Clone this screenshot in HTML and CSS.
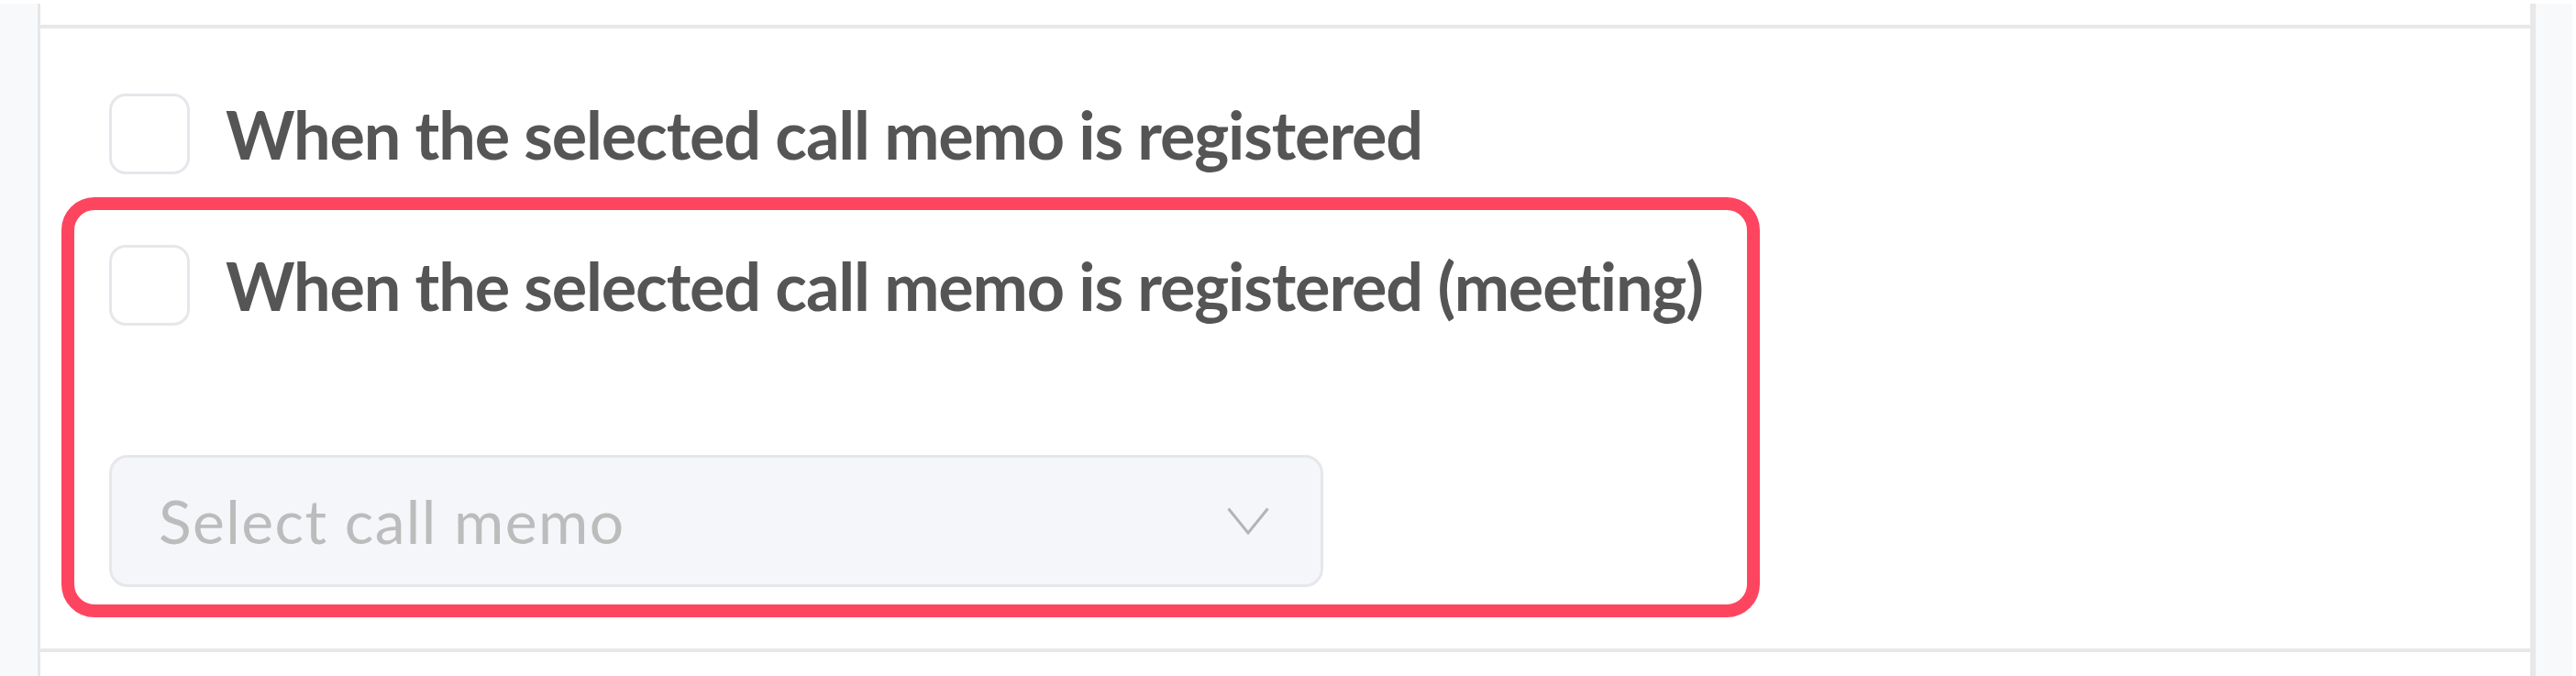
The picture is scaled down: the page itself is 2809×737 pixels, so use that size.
FILE: index.html
```html
<!DOCTYPE html>
<html lang="en-US">
    <head>
        <meta charset="utf-8">
        <title>Call memo triggers</title>
        <meta name="viewport" content="width=device-width, initial-scale=1">
        <link rel="stylesheet" href="styles.css">
    </head>
<body>
    <div class="page">
        <aside class="rail"></aside>

        <main class="panel">
            <div class="prev"></div>

            <section class="triggers">
                <label class="option option-plain">
                    <span class="box"></span>
                    <span class="label">When the selected call memo is registered</span>
                </label>

                <!-- highlighted trigger -->
                <div class="highlight">
                    <label class="option">
                        <span class="box"></span>
                        <span class="label">When the selected call memo is registered (meeting)</span>
                    </label>

                    <div class="select">
                        <span class="placeholder">Select call memo</span>
                        <svg class="chevron" width="46" height="30" viewBox="0 0 46 30">
                            <polyline points="1.5,1.5 23,28 44.5,1.5" fill="none" stroke="#b4b4b4" stroke-width="3"/>
                        </svg>
                    </div>
                </div>
            </section>
        </main>

        <aside class="rail rail-right"></aside>
    </div>
</body>
</html>
```

FILE: styles.css
```css
body {
    margin: 0;
    background: #fff;
    font-family: Lato, "Noto Sans", sans-serif;
}

.page {
    display: flex;
    height: 737px;
    padding: 4px 4px 0 0;
    box-sizing: border-box;
    overflow: hidden;
}

.rail {
    width: 41px;
    background: #f8f9fb;
}

.rail-right {
    width: 40px;
}

.panel {
    flex: 1;
    border-left: 3px solid #e6e7e9;
    border-right: 6px solid #e8e8e9;
}

.prev {
    height: 23px;
    border-bottom: 4px solid #e8e8e9;
}

.triggers {
    padding: 71px 0 34px 23px;
    border-bottom: 4px solid #e8e8e9;
}

.option {
    display: flex;
    align-items: center;
    gap: 39px;
}

.option-plain {
    margin-left: 52px;
}

.box {
    flex: none;
    width: 88px;
    height: 88px;
    box-sizing: border-box;
    border: 3px solid #e5e7eb;
    border-radius: 18px;
    background: #fff;
}

.label {
    font-size: 72px;
    font-weight: 700;
    line-height: 1.2;
    letter-spacing: -1.15px;
    white-space: nowrap;
    color: #555;
}

.highlight {
    width: 1852px;
    box-sizing: border-box;
    margin-top: 25px;
    padding: 38px 0 19px 38px;
    border: 14px solid #fe4560;
    border-radius: 36px;
}

.select {
    display: flex;
    align-items: center;
    justify-content: space-between;
    width: 1324px;
    height: 144px;
    box-sizing: border-box;
    margin-top: 141px;
    padding: 0 56px 0 51px;
    border: 3px solid #e6e7eb;
    border-radius: 20px;
    background: #f5f6fa;
}

.placeholder {
    font-size: 66px;
    line-height: 1.2;
    letter-spacing: 1.4px;
    color: #bcbcbc;
}
```
